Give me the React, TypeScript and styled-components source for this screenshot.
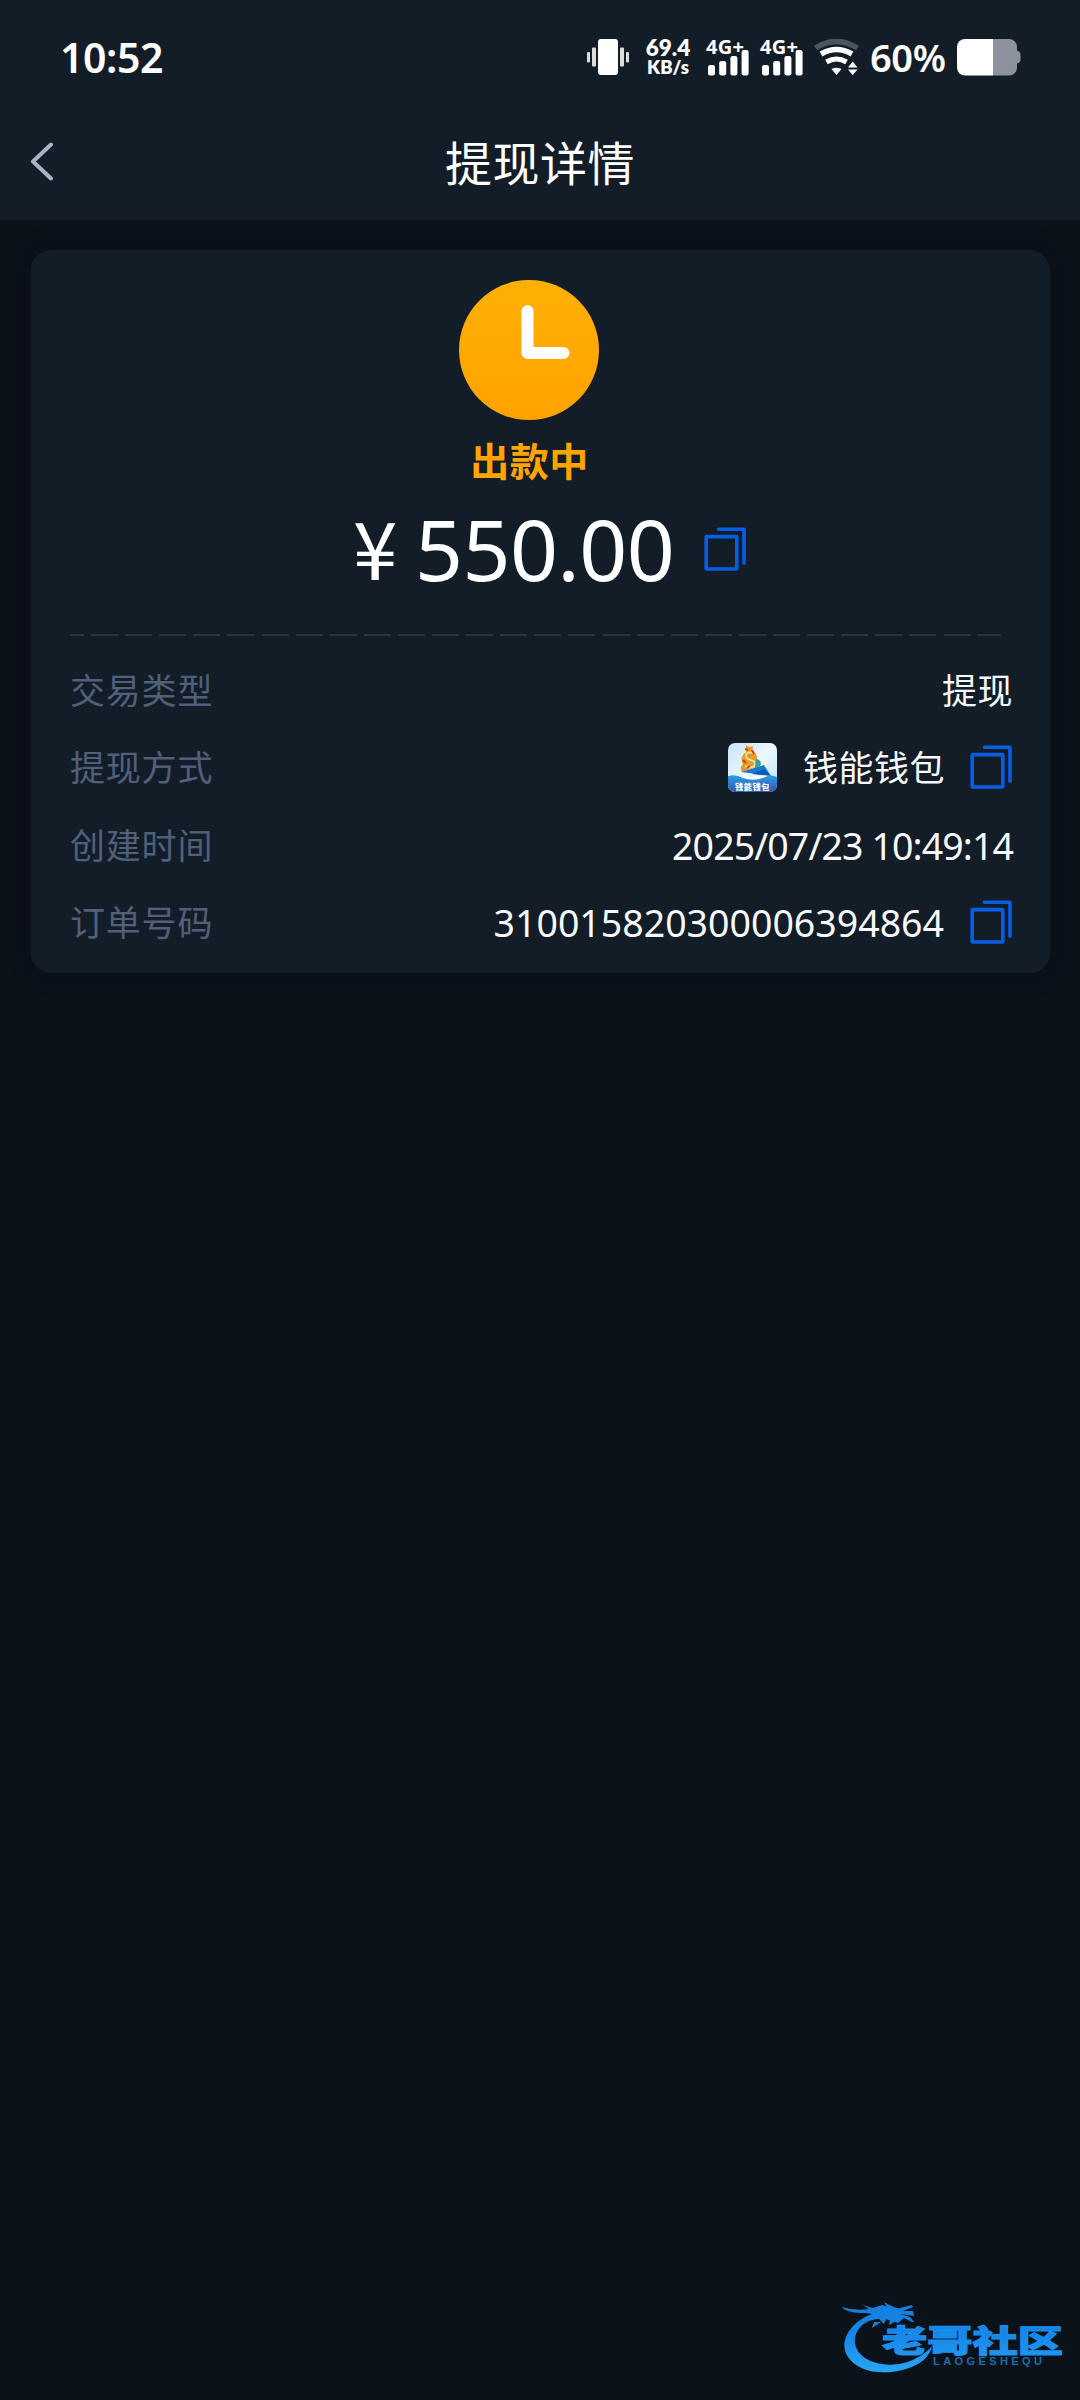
import React from "react";
import styled, { createGlobalStyle } from "styled-components";

const latin = `"Noto Sans", "Noto Sans CJK SC", sans-serif`;
const cjk = `"Noto Sans CJK SC", sans-serif`;

const GlobalStyle = createGlobalStyle`
  * { box-sizing: border-box; }
  body { margin: 0; background: #0b121a; }
  svg { display: block; flex: none; }
`;

const Screen = styled.main`
  position: relative;
  width: 1080px;
  height: 2400px;
  overflow: hidden;
  background: #0b121a;
  color: #fff;
  font-family: ${latin};
`;

const Top = styled.header`
  height: 220px;
  background: #131d28;
`;

const StatusBar = styled.div`
  display: flex;
  justify-content: space-between;
  height: 116px;
  padding: 39px 59px 0 60px;
`;

const Time = styled.div`
  font-size: 41px;
  font-weight: 600;
  line-height: 37px;
  letter-spacing: -0.4px;
`;

const StatusIcons = styled.div`
  display: flex;
  align-items: flex-start;
  height: 37px;
`;

const Speed = styled.div`
  display: flex;
  flex-direction: column;
  align-items: center;
  width: 44px;
  margin: 0 16px 0 16px;
  font-family: Lato, ${latin};
  font-weight: 800;
`;

const SpeedLine = styled.span<{ $size: number; $height: number }>`
  font-size: ${(p) => p.$size}px;
  line-height: ${(p) => p.$height}px;
  white-space: nowrap;
`;

const SignalBox = styled.div`
  display: flex;
  flex-direction: column;
  width: 44px;
  height: 37px;
  margin-right: 10px;
`;

const Network = styled.span`
  height: 11px;
  font-size: 20px;
  font-weight: 700;
  line-height: 15px;
  letter-spacing: 0.3px;
  white-space: nowrap;
`;

const Percent = styled.div`
  width: 78px;
  margin: 0 9px 0 10px;
  font-size: 38px;
  font-weight: 600;
  line-height: 36px;
  letter-spacing: -0.4px;
  white-space: nowrap;
`;

const NavBar = styled.div`
  display: grid;
  grid-template-columns: 90px 1fr 90px;
  align-items: center;
  height: 89px;
`;

const Back = styled.button`
  padding: 0 0 0 29px;
  border: 0;
  background: none;
`;

const Title = styled.h1`
  margin: 0;
  font: 400 47px/60px ${cjk};
  letter-spacing: 0.5px;
  text-align: center;
`;

const Card = styled.section`
  margin: 30px 30px 0 31px;
  height: 723px;
  padding: 30px 37px 0 39px;
  border-radius: 20px;
  background: #131d28;
  box-shadow: 0 0 20px rgba(8, 12, 18, 0.6);
`;

const Summary = styled.div`
  display: flex;
  flex-direction: column;
  align-items: center;
  padding-right: 26px;
`;

const State = styled.div`
  margin-top: 15px;
  padding-left: 2px;
  color: #ffa400;
  font: 700 39px/48px ${cjk};
  letter-spacing: 0.5px;
`;

const AmountRow = styled.div`
  display: flex;
  align-items: center;
  height: 100px;
  margin-top: 16px;
  padding-left: 42px;
`;

const Currency = styled.span`
  width: 62px;
  font: 400 80px/100px ${cjk};
  height: 109px;
`;

const Amount = styled.span`
  width: 289px;
  font-size: 84px;
  line-height: 100px;
  letter-spacing: -0.6px;
`;

const Divider = styled.div`
  width: 931px;
  height: 2px;
  margin-top: 35px;
  background: repeating-linear-gradient(90deg, #283541 0 27px, transparent 27px 34.1px);
  background-position-x: -13px;
  background-size: 1100px 2px;
`;

const Details = styled.dl`
  display: grid;
  grid-template-rows: 77px 77px 79px 75px;
  margin: 16px 0 0;
`;

const Row = styled.div`
  display: flex;
  align-items: center;
  justify-content: space-between;
`;

const Label = styled.dt`
  padding-bottom: 4px;
  color: #50607a;
  font: 400 35px/52px ${cjk};
  letter-spacing: 0.8px;
`;

const Value = styled.dd<{ $size?: number; $spacing?: number }>`
  display: flex;
  align-items: center;
  margin: 0;
  color: #f7f9fc;
  font-size: ${(p) => p.$size ?? 35}px;
  line-height: 52px;
  letter-spacing: ${(p) => p.$spacing ?? 0.5}px;
  white-space: nowrap;

  && > svg:last-child {
    margin: 0 1px 2px 0;
  }
`;

const WalletName = styled.span`
  margin: 0 25px 0 26px;
`;

const OrderNo = styled.span`
  margin-right: 26px;
`;

const Watermark = styled.div`
  position: absolute;
  right: 16px;
  bottom: 24px;
`;

const CopyIcon = () => (
  <svg width="42" height="44" viewBox="0 0 42 44" fill="none" stroke="#075ee6" strokeWidth="3.6" strokeLinejoin="round" strokeLinecap="round">
    <rect x="2.2" y="9.6" width="30.6" height="32.4" rx="0.6" />
    <path d="M14.5 2.2H40v34" />
  </svg>
);

const ClockIcon = () => (
  <svg width="140" height="140" viewBox="0 0 140 140">
    <defs>
      <linearGradient id="clock" x1="0" y1="0" x2="0" y2="1">
        <stop stopColor="#ffb005" />
        <stop offset="1" stopColor="#ffa200" />
      </linearGradient>
    </defs>
    <circle cx="70" cy="70" r="70" fill="url(#clock)" />
    <path d="M68.5 31V73H104.5" fill="none" stroke="#fff" strokeWidth="12" strokeLinecap="round" strokeLinejoin="round" />
  </svg>
);

const VibrateIcon = () => (
  <svg width="43" height="37" viewBox="0 0 43 37" fill="#fff">
    <rect x="11" width="20" height="36" rx="3" />
    <g opacity="0.85">
      <rect y="13" width="3" height="10.5" rx="1" />
      <rect x="5" y="8.5" width="4" height="19" rx="1" />
      <rect x="33" y="8.5" width="4" height="19" rx="1" />
      <rect x="39" y="13" width="3" height="10.5" rx="1" />
    </g>
  </svg>
);

const bars = [
  { x: 2, h: 10.5 },
  { x: 13.2, h: 14.5 },
  { x: 24.4, h: 19.5 },
  { x: 35.6, h: 25.5 },
];

const Signal = () => (
  <SignalBox>
    <Network>4G+</Network>
    <svg width="44" height="26" viewBox="0 0 44 26" fill="#fff">
      {bars.map((b) => (
        <rect key={b.x} x={b.x} y={25.5 - b.h} width="7" height={b.h} rx="2.2" />
      ))}
    </svg>
  </SignalBox>
);

const WifiIcon = () => (
  <svg width="46" height="37" viewBox="0 0 46 37" fill="none" stroke="#fff" strokeWidth="5">
    <path d="M1.5 9Q22 -4 43.500 9" stroke="#4b5560" strokeWidth="5.500" />
    <path d="M7 15Q22.500 6 38 15" strokeWidth="5.500" />
    <path d="M12.500 23Q22.500 17 32.500 23" />
    <path d="M17.500 30Q22.500 27.500 27.500 30L22.500 36Z" fill="#fff" stroke="none" />
    <path d="M38.700 22.500L43.500 28.500H34ZM38.700 36L43.500 30.500H34Z" fill="#fff" stroke="none" />
  </svg>
);

const BatteryIcon = () => (
  <svg width="64" height="37" viewBox="0 0 64 37">
    <path d="M36 0H52a8 8 0 0 1 8 8V11.500q3.500 1 3.500 4v5q0 3-3.500 4V28.500a8 8 0 0 1-8 8H36Z" fill="#8d919b" />
    <path d="M36 0H8a8 8 0 0 0-8 8V28.500a8 8 0 0 0 8 8H36Z" fill="#fff" />
  </svg>
);

const WalletLogo = () => (
  <svg width="49" height="49" viewBox="0 0 49 49">
    <defs>
      <linearGradient id="sky" x1="0" y1="0" x2="1" y2="1">
        <stop stopColor="#c9e3fa" />
        <stop offset="0.5" stopColor="#eef8ff" />
        <stop offset="1" stopColor="#b9ddfa" />
      </linearGradient>
      <linearGradient id="sea" x1="0" y1="0" x2="0" y2="1">
        <stop stopColor="#2c9eea" />
        <stop offset="1" stopColor="#3457ad" />
      </linearGradient>
      <clipPath id="tile"><rect width="49" height="49" rx="7" /></clipPath>
    </defs>
    <g clipPath="url(#tile)">
      <rect width="49" height="49" fill="url(#sky)" />
      <path d="M18 2l3 2 4-1-1 5q6 3 5 8 5 2 4 6L14 29q-3-5 1-8-4-7 3-12z" fill="#e99a25" />
      <path d="M25 10q-7-2-7 3 0 3 5 4 6 2 3 6-4 3-9 0" fill="none" stroke="#fbe3a0" strokeWidth="1.800" />
      <path d="M17 6l3 1M15 17l3 3M24 7l2 4M19 25l3-2" stroke="#c5491d" strokeWidth="2" />
      <path d="M28 16q6 1 4 7l-5 2z" fill="#27a5a3" />
      <path d="M13 29L36 22 43 33 29 31Z" fill="#1678cf" />
      <path d="M24 31l12-5 7 7z" fill="#0b5cb3" />
      <path d="M0 32q12 4 22 2 14-3 27 0V40H0Z" fill="#fff" />
      <path d="M0 33Q8 31 15 35 26 39 37 34 43 31 49 34V49H0Z" fill="url(#sea)" />
      <text x="7" y="46.500" textLength="35" lengthAdjust="spacingAndGlyphs" fill="#fff" fontFamily="Noto Sans CJK SC" fontWeight="900" fontSize="7.500">钱能钱包</text>
    </g>
  </svg>
);

const WatermarkLogo = () => (
  <svg width="222" height="74" viewBox="0 0 222 74">
    <defs>
      <linearGradient id="brand" gradientUnits="userSpaceOnUse" x1="0" y1="5" x2="0" y2="70">
        <stop stopColor="#157fdc" />
        <stop offset="0.450" stopColor="#1687ea" />
        <stop offset="1" stopColor="#27a6f5" />
      </linearGradient>
    </defs>
    <g fill="url(#brand)">
      <path d="M30 12C8 20-4 40 6 55 16 70 40 74 64 67 80 62 88 54 90 44 78 58 58 65 40 62 20 59 9 46 14 32 18 22 28 17 37 17L42 22 44 17 56 21 62 16 70 20H72L68 15 58 12 72 14 71 9 61 9 71 5 70 3 54 7 40 3 28 7Q12 9 0 5 4 11 24 11Z" />
      <path d="M20 2q8 5 18 4l-5 6zM42 0q8 5 16 7l-10 3zM32 20l-2 6 9-6zM48 18l-1 5 7-4z" />
      <text x="40" y="50" textLength="181" lengthAdjust="spacingAndGlyphs" fontFamily="Noto Sans CJK SC" fontSize="31" fontWeight="900" stroke="#1b8fee" strokeWidth="1.100">老哥社区</text>
    </g>
    <text x="91" y="63" textLength="109" fill="#1c6dae" fontFamily="Liberation Sans" fontWeight="700" fontSize="11">LAOGESHEQU</text>
  </svg>
);

export default function App() {
  return (
    <Screen>
      <GlobalStyle />
      <Top>
        <StatusBar>
          <Time>10:52</Time>
          <StatusIcons>
            <VibrateIcon />
            <Speed>
              <SpeedLine $size={22.5} $height={18}>69.4</SpeedLine>
              <SpeedLine $size={18.5} $height={21}>KB/s</SpeedLine>
            </Speed>
            <Signal />
            <Signal />
            <WifiIcon />
            <Percent>60%</Percent>
            <BatteryIcon />
          </StatusIcons>
        </StatusBar>
        <NavBar>
          <Back aria-label="返回">
            <svg width="26" height="40" viewBox="0 0 26 40" fill="none" stroke="#a9b4c3" strokeWidth="4" strokeLinecap="round" strokeLinejoin="round">
              <path d="M22 3.500L4 20.500 22 37.500" />
            </svg>
          </Back>
          <Title>提现详情</Title>
        </NavBar>
      </Top>
      <Card>
        <Summary>
          <ClockIcon />
          <State>出款中</State>
          <AmountRow>
            <Currency>¥</Currency>
            <Amount>550.00</Amount>
            <CopyIcon />
          </AmountRow>
        </Summary>
        <Divider />
        <Details>
          <Row>
            <Label>交易类型</Label>
            <Value>提现</Value>
          </Row>
          <Row>
            <Label>提现方式</Label>
            <Value>
              <WalletLogo />
              <WalletName>钱能钱包</WalletName>
              <CopyIcon />
            </Value>
          </Row>
          <Row>
            <Label>创建时间</Label>
            <Value $size={37.5} $spacing={-0.9}>2025/07/23 10:49:14</Value>
          </Row>
          <Row>
            <Label>订单号码</Label>
            <Value $size={37.5} $spacing={0}>
              <OrderNo>310015820300006394864</OrderNo>
              <CopyIcon />
            </Value>
          </Row>
        </Details>
      </Card>
      <Watermark>
        <WatermarkLogo />
      </Watermark>
    </Screen>
  );
}
